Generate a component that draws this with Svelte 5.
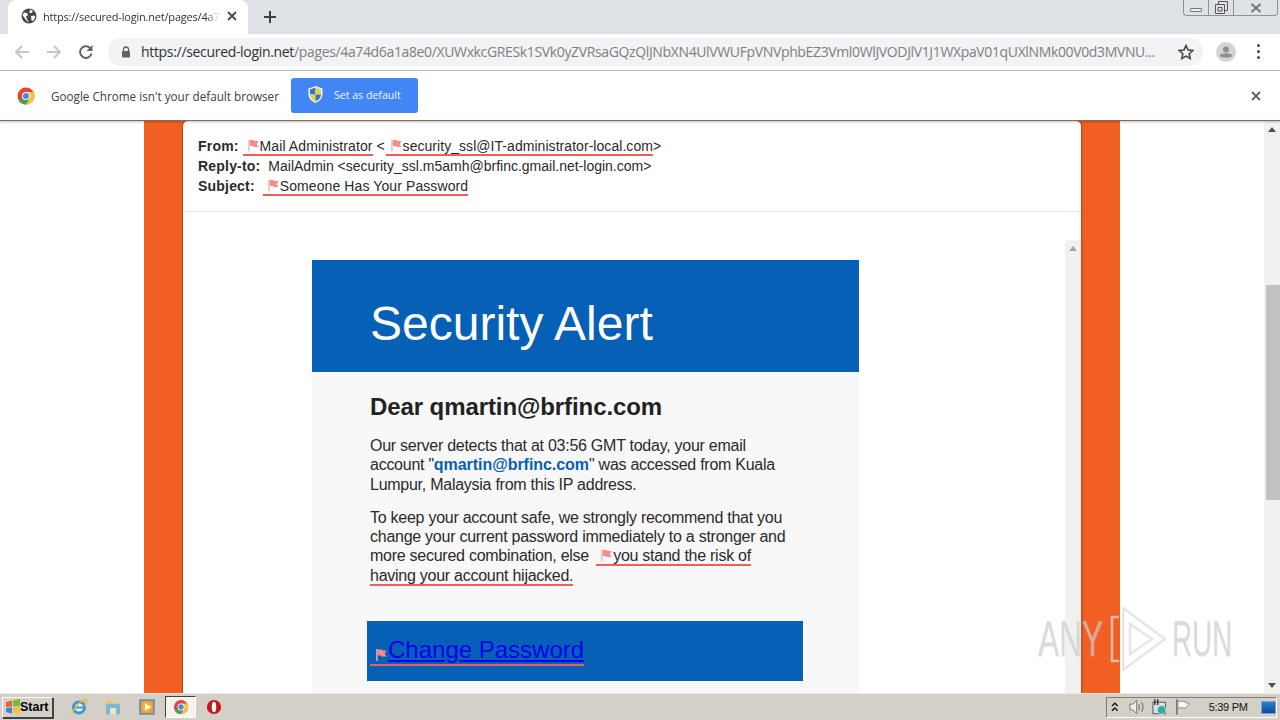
<script>
  const longUrl = "/pages/4a74d6a1a8e0/XUWxkcGRESk1SVk0yZVRsaGQzQlJNbXN4UlVWUFpVNVphbEZ3Vml0WlJVODJlV1J1WXpaV01qUXlNMk00V0d3MVNU...";
</script>

<div class="screen">
  <header class="tabstrip">
    <div class="tab">
      <svg class="globe" viewBox="0 0 16 16" width="16" height="16"><circle cx="8" cy="8" r="7.5" fill="#45484c"/><path d="M3 4.500l3 .5 1 2-2 1.500 1 2.500 1.500 3-1-.2L3.500 10 1.500 7zM9 1.500l3 1.500-1.500 2H8.500zM10 8l3.500-.5.8 2-2.300 3.500-1.500-.5z" fill="#fff"/></svg>
      <span class="tab-title">https://secured-login.net/pages/4a7</span>
      <svg class="tab-x" viewBox="0 0 10 10" width="10" height="10"><path d="M1 1l8 8M9 1l-8 8" stroke="#45484c" stroke-width="1.800"/></svg>
    </div>
    <svg class="plus" viewBox="0 0 12 12" width="12" height="12"><path d="M6 0v12M0 6h12" stroke="#3c4043" stroke-width="2"/></svg>
    <div class="winbtns">
      <span class="wb wb-min"><i></i></span>
      <span class="wb wb-max"><svg viewBox="0 0 13 13" width="13" height="13"><path d="M3.500 3.500V.5h9v9h-3M.5 3.500h9v9h-9zM3 6.500h4v3.500H3z" fill="none" stroke="#555"/></svg></span>
      <span class="wb wb-close"><svg viewBox="0 0 12 10" width="12" height="10"><path d="M1.500 1l9 8M10.500 1l-9 8" stroke="#777" stroke-width="2"/></svg></span>
    </div>
  </header>

  <nav class="toolbar">
    <svg class="nav-ic" viewBox="0 0 16 16" width="16" height="16"><path d="M15 8H2M8 2L2 8l6 6" fill="none" stroke="#c4c7ca" stroke-width="2"/></svg>
    <svg class="nav-ic" viewBox="0 0 16 16" width="16" height="16"><path d="M1 8h13M8 2l6 6-6 6" fill="none" stroke="#c4c7ca" stroke-width="2"/></svg>
    <svg class="nav-ic" viewBox="0 0 16 16" width="16" height="16"><path d="M13.500 9.500A5.800 5.800 0 1 1 12 4" fill="none" stroke="#5f6368" stroke-width="2"/><path d="M14.500 1v6h-6z" fill="#5f6368"/></svg>
    <div class="omnibox">
      <svg class="lock" viewBox="0 0 10 12" width="10" height="12"><path d="M2.500 5V3.500a2.500 2.500 0 0 1 5 0V5" fill="none" stroke="#5f6368" stroke-width="1.300"/><rect x="1" y="5" width="8" height="6.500" rx="1" fill="#5f6368"/></svg>
      <span class="url"><span class="url-host">https://secured-login.net</span>{longUrl}</span>
      <svg class="star" viewBox="0 0 16 16" width="16" height="16"><path d="M8 1.500l2 4.500 4.800.5-3.600 3.200 1 4.800L8 12.100l-4.200 2.400 1-4.800L1.200 6.500 6 6z" fill="none" stroke="#45484c" stroke-width="1.600"/></svg>
    </div>
    <span class="avatar"><svg viewBox="0 0 20 20" width="20" height="20"><circle cx="10" cy="10" r="10" fill="#d3d4d6"/><circle cx="10" cy="7.500" r="3" fill="#8d8f92"/><path d="M3.500 13.500c2-3 11-3 13 0-1 3-12 3-13 0z" fill="#8d8f92"/></svg></span>
    <span class="kebab"><i></i><i></i><i></i></span>
  </nav>

  <aside class="infobar">
    <svg class="chrome-ic" viewBox="0 0 18 18" width="18" height="18">
      <circle cx="9" cy="9" r="8.500" fill="#ea4335"/>
      <path d="M9 9L1.600 13.200A8.500 8.500 0 0 0 9 17.500l4.300-6z" fill="#4a9d56"/>
      <path d="M9 5h7.500a8.500 8.500 0 0 1-7.500 12.500l4-7z" fill="#f6c343"/>
      <circle cx="9" cy="9" r="4" fill="#fff"/><circle cx="9" cy="9" r="3" fill="#4a86d8"/>
    </svg>
    <span class="info-text">Google Chrome isn't your default browser</span>
    <button class="default-btn">
      <svg viewBox="0 0 15 17" width="15" height="17">
        <path d="M7.500 0l7 2.500v6c0 4-3 6.800-7 8.500-4-1.700-7-4.500-7-8.500v-6z" fill="#f4f6f8"/>
        <path d="M7.500 1.500V8.500H2V3.400z" fill="#2f78c8"/>
        <path d="M7.500 1.500L13 3.400v5.100H7.500z" fill="#f2cf3e"/>
        <path d="M2 8.500h5.500v6.800C4.300 14 2 11.800 2 8.500z" fill="#f2cf3e"/>
        <path d="M13 8.500H7.500v6.800c3.200-1.300 5.500-3.500 5.500-6.800z" fill="#2f78c8"/>
      </svg>
      <span>Set as default</span>
    </button>
    <svg class="info-x" viewBox="0 0 10 10" width="10" height="10"><path d="M1 1l8 8M9 1l-8 8" stroke="#5f6368" stroke-width="1.800"/></svg>
  </aside>

  <main class="viewport">
    <div class="page">
      <div class="orange">
        <article class="card">
          <section class="meta">
            <div class="meta-row"><b>From:</b> <mark class="flagged wide"><svg class="flag"><use href="#flag"/></svg>Mail Administrator</mark> &lt; <mark class="flagged email"><svg class="flag"><use href="#flag"/></svg>security_ssl@IT-administrator-local.com</mark>&gt;</div>
            <div class="meta-row"><b>Reply-to:</b> <span class="gap2"></span>MailAdmin &lt;security_ssl.m5amh@brfinc.gmail.net-login.com&gt;</div>
            <div class="meta-row"><b>Subject:</b> <span class="gap3"></span><mark class="flagged wide"><svg class="flag"><use href="#flag"/></svg>Someone Has Your Password</mark></div>
          </section>
          <section class="frame">
            <div class="mail">
              <div class="mail-head">Security Alert</div>
              <div class="mail-body">
                <h2>Dear qmartin@brfinc.com</h2>
                <p>Our server detects that at 03:56 GMT today, your email account "<a class="addr" href="#top">qmartin@brfinc.com</a>" was accessed from Kuala Lumpur, Malaysia from this IP address.</p>
                <p>To keep your account safe, we strongly recommend that you change your current password immediately to a stronger and more secured combination, else <mark class="flagged risk"><svg class="flag"><use href="#flag"/></svg>you stand the risk of having your account hijacked.</mark></p>
                <div class="cta"><mark class="flagged cta-link"><svg class="flag flag-sm"><use href="#flag"/></svg><a href="#top">Change Password</a></mark></div>
              </div>
            </div>
            <div class="inner-scroll">
              <span class="up-mini"></span>
            </div>
          </section>
        </article>
      </div>
      <div class="watermark">
        <span class="wm-any">ANY</span>
        <svg viewBox="0 0 56 64" width="56" height="64">
          <path d="M9 10H2v44h7" fill="none" stroke="#d9d9d9" stroke-width="2.500" opacity=".75"/>
          <path d="M13 1l42 31-42 31z" fill="none" stroke="#dcdcdc" stroke-width="2.500" opacity=".7"/>
          <path d="M20 17l22 15-22 15z" fill="none" stroke="#dcdcdc" stroke-width="2.500" opacity=".7"/>
        </svg>
        <span class="wm-run">RUN</span>
      </div>
    </div>
    <div class="scrollbar">
      <span class="arrow up"></span>
      <span class="thumb"></span>
      <span class="arrow down"></span>
    </div>
  </main>

  <footer class="taskbar">
    <button class="start">
      <svg viewBox="0 0 16 16" width="16" height="16"><path d="M1 3l6-1.500v6L1 8z" fill="#e8622c"/><path d="M8 1.500L15 0v7l-7 .5z" fill="#7cb83f"/><path d="M1 9l6-.5v6L1 13z" fill="#3a86d6"/><path d="M8 8.500l7-.5v7l-7-1z" fill="#f3c53c"/></svg>
      <b>Start</b>
    </button>
    <div class="quick">
      <svg viewBox="0 0 18 18" width="18" height="18"><circle cx="9" cy="9.500" r="5.500" fill="#e9f2f8" stroke="#3d96d8" stroke-width="3"/><path d="M4 9.500h10" stroke="#3d96d8" stroke-width="2"/><path d="M1.500 16C5 8 11 2 16.500 1.500c1 2-1 5-2 6.500" fill="none" stroke="#e6b93c" stroke-width="1.300"/></svg>
      <svg viewBox="0 0 18 18" width="18" height="18"><path d="M2 6V3h6l1 2h7v2z" fill="#e8c668"/><rect x="2" y="6" width="14" height="10.500" rx="1" fill="#7bb8d8"/><rect x="6" y="10" width="6" height="6.500" fill="#eae6cc"/></svg>
      <svg viewBox="0 0 18 18" width="18" height="18"><rect x="2" y="2" width="14" height="14" fill="#f39a2e" stroke="#4d90c8" stroke-width="1.500"/><circle cx="9" cy="9" r="5" fill="#f7b43c"/><path d="M7 5.500l6 3.500-6 3.500z" fill="#fff"/></svg>
      <span class="active-app"><svg viewBox="0 0 18 18" width="16" height="16"><circle cx="9" cy="9" r="8" fill="#d9483b"/><path d="M9 9L2.200 13.200A8 8 0 0 0 9 17l4-6z" fill="#4a9d56"/><path d="M9 5h7a8 8 0 0 1-7 12l4-7z" fill="#f6c343"/><circle cx="9" cy="9" r="4" fill="#fff"/><circle cx="9" cy="9" r="3" fill="#4a86d8"/></svg></span>
      <svg class="opera" viewBox="0 0 18 18" width="16" height="16"><circle cx="9" cy="9" r="8" fill="#c8151b"/><ellipse cx="9" cy="9" rx="2.500" ry="6" fill="#fff"/></svg>
    </div>
    <div class="tray">
      <svg viewBox="0 0 8 10" width="8" height="10"><path d="M1 4l3-3 3 3M1 9l3-3 3 3" fill="none" stroke="#111" stroke-width="1.400"/></svg>
      <svg class="speaker" viewBox="0 0 16 16" width="16" height="16"><path d="M1 5h3l4-4v14l-4-4H1z" fill="#eee" stroke="#777"/><path d="M10 5c1 2 1 4 0 6M13 3c2 3 2 7 0 10" fill="none" stroke="#777" stroke-width="1.200"/></svg>
      <svg viewBox="0 0 16 16" width="16" height="16"><rect x="1" y="3" width="13" height="12" fill="#d5e2ea" stroke="#555"/><circle cx="10" cy="11" r="4.500" fill="#39a9a3" stroke="#dff" stroke-width=".7"/><path d="M3 0v6M6 0v6" stroke="#222" stroke-width="1.300"/></svg>
      <svg viewBox="0 0 16 16" width="16" height="16"><path d="M2 0v16" stroke="#666" stroke-width="1.500"/><path d="M3 2h6l6 3-4 4H3z" fill="#f6f6f6" stroke="#888"/></svg>
      <span class="clock">5:39 PM</span>
      <span class="desktop"></span>
    </div>
  </footer>

  <svg class="defs" width="0" height="0" aria-hidden="true">
    <symbol id="flag" viewBox="0 0 12 13"><path d="M1 0v13" stroke="#f5b5b5" stroke-width="1.500"/><path d="M2 .5h4l1 1h4.500L9.500 5l2 3H6.500l-1-1H2z" fill="#fb8a8a"/></symbol>
  </svg>
</div>

<style>
  :global(body) { margin: 0; }
  .screen { width: 1280px; height: 720px; display: flex; flex-direction: column; overflow: hidden; position: relative; font-family: "Liberation Sans", Arial, sans-serif; background: #fff; }
  .defs { position: absolute; }

  .tabstrip { height: 34px; flex: none; background: #dee1e6; display: flex; align-items: flex-end; }
  .tab { width: 240px; height: 34px; margin-left: 8px; background: #fff; border-radius: 8px 8px 0 0; display: flex; align-items: center; box-sizing: border-box; padding: 0 8px 2px 13px; }
  .globe { flex: none; }
  .tab-title { font-family: "Open Sans", sans-serif; font-size: 11px; color: #333; margin-left: 6px; width: 177px; white-space: nowrap; letter-spacing: -.2px; -webkit-mask-image: linear-gradient(90deg, #000 92%, transparent); mask-image: linear-gradient(90deg, #000 92%, transparent); }
  .tab-x { margin-left: 7px; flex: none; }
  .plus { align-self: center; margin-left: 16px; flex: none; }
  .winbtns { margin-left: auto; margin-right: 2px; align-self: flex-start; display: flex; height: 16px; border: 1px solid #8a929c; border-top: 0; border-radius: 0 0 4px 4px; box-sizing: border-box; }
  .wb { display: flex; align-items: center; justify-content: center; height: 100%; }
  .wb-min { width: 24px; border-right: 1px solid #8a929c; }
  .wb-min i { display: block; width: 12px; height: 4px; border: 1px solid #777; border-radius: 1px; box-sizing: border-box; margin-top: 5px; background: #eee; }
  .wb-max { width: 24px; border-right: 1px solid #8a929c; }
  .wb-close { width: 43px; }

  .toolbar { height: 37px; flex: none; box-sizing: border-box; background: #fff; border-bottom: 1px solid #bcbdbe; display: flex; align-items: center; padding: 0 0 1px 14px; }
  .nav-ic { flex: none; margin-right: 16px; }
  .nav-ic:nth-child(3) { margin-right: 14px; }
  .omnibox { width: 1095px; height: 28px; background: #f1f3f4; border-radius: 14px; display: flex; align-items: center; box-sizing: border-box; padding: 0 9px 0 13px; flex: none; }
  .lock { flex: none; }
  .url { font-family: "Open Sans", sans-serif; font-size: 14px; color: #7d8084; margin-left: 10px; width: 1018px; white-space: nowrap; letter-spacing: -.36px; }
  .url-host { color: #303236; letter-spacing: -.32px; }
  .star { margin-left: auto; flex: none; }
  .avatar { width: 20px; height: 20px; margin-left: 13px; flex: none; }
  .kebab { display: flex; flex-direction: column; gap: 3px; margin-left: 21px; }
  .kebab i { display: block; width: 3px; height: 3px; border-radius: 50%; background: #45484c; }

  .infobar { height: 50px; flex: none; box-sizing: border-box; background: #fff; border-bottom: 1px solid #8a6a58; box-shadow: 0 1px 2px rgba(0,0,0,.25); display: flex; align-items: center; padding: 0 17px; position: relative; z-index: 2; }
  .info-text { font-family: "Open Sans", sans-serif; font-size: 11.700px; color: #3c4043; margin-left: 16px; white-space: nowrap; }
  .default-btn { width: 127px; height: 35px; margin-left: 12px; background: #4285f4; border: 0; border-radius: 3px; color: #f2f6fe; font-family: "Open Sans", sans-serif; font-size: 10.600px; display: flex; align-items: center; justify-content: flex-start; padding: 0 0 2px 17px; gap: 11px; }
  .info-x { margin-left: auto; margin-right: 2px; }

  .viewport { flex: 1; min-height: 0; display: flex; background: #fff; }
  .page { flex: 1; position: relative; overflow: hidden; display: flex; }
  .orange { width: 976px; margin-left: 144px; background: #f15f22; box-sizing: border-box; padding: 0 39px; }
  .card { background: #fff; height: 100%; border-radius: 5px 5px 0 0; box-shadow: -1px 0 1px #a8481a, 1px 0 2px #a8481a; display: flex; flex-direction: column; }
  .meta { height: 91px; flex: none; box-sizing: border-box; border-bottom: 1px solid #e6e6e6; padding: 15px 0 0 15px; font-size: 14px; line-height: 20px; color: #2a2a2a; }
  .meta-row { white-space: nowrap; }
  .meta-row b { letter-spacing: .2px; }
  .gap2 { display: inline-block; width: 4px; }
  .gap3 { display: inline-block; width: 4px; }
  mark.flagged { background: none; color: inherit; border-bottom: 2px solid #ee5f5b; padding-left: 4px; }
  mark.wide { letter-spacing: .1px; }
  mark.email { letter-spacing: .05px; margin-left: -3px; }
  mark.risk { margin-left: 3px; }
  .flag { width: 11px; height: 13px; margin: 0 1px; vertical-align: -1px; }
  .flag-sm { width: 11px; height: 12px; margin: 0 1px 0 2px; vertical-align: -3px; }

  .frame { flex: 1; min-height: 0; display: flex; padding-top: 28px; position: relative; }
  .mail { width: 547px; margin-left: 129px; margin-top: 20px; flex: none; display: flex; flex-direction: column; }
  .mail-head { height: 112px; flex: none; box-sizing: border-box; background: #0560b6; color: #fff; font-size: 48px; line-height: 54px; padding: 37px 0 0 58px; white-space: nowrap; }
  .mail-body { flex: 1; background: #f8f8f8; box-sizing: border-box; padding: 20px 0 0 58px; color: #2a2a2a; }
  .mail-body h2 { margin: 0 0 14px; font-size: 24px; line-height: 30px; font-weight: 700; letter-spacing: -.09px; color: #222; }
  .mail-body p { margin: 0 0 14px; width: 420px; font-size: 16px; line-height: 19.300px; letter-spacing: -.26px; }
  .addr { color: #0560b6; font-weight: 700; text-decoration: none; letter-spacing: -.05px; }
  .cta { width: 436px; height: 60px; margin: 36px 0 0 -3px; background: #0560b6; box-sizing: border-box; padding: 14px 0 0 3px; font-size: 24px; line-height: 30px; }
  .cta-link { display: inline-block; padding-left: 0; line-height: 28px; border-bottom-color: #e8605a; }
  .cta-link a { color: #0000ee; text-decoration: underline; }

  .inner-scroll { position: absolute; right: 0; top: 28px; bottom: 0; width: 16px; background: #f1f1f1; }
  .up-mini { position: absolute; left: 4px; top: 6px; border: 4px solid transparent; border-top: 0; border-bottom: 5px solid #a3a3a3; }

  .watermark { position: absolute; left: 1038px; top: 486px; height: 64px; display: flex; align-items: center; font-size: 50px; line-height: 64px; color: rgba(205,205,205,.6); text-shadow: 1px 1px 1px rgba(200,200,200,.35); pointer-events: none; }
  .watermark svg { flex: none; margin-left: 7px; margin-right: 6px; }
  .watermark span { display: block; width: 65px; white-space: nowrap; transform-origin: left center; }
  .wm-any { transform: scaleX(.63); }
  .watermark .wm-run { width: 60px; transform: scaleX(.555); }

  .scrollbar { width: 16px; flex: none; background: #f1f1f1; position: relative; }
  .arrow { position: absolute; left: 4px; border: 4px solid transparent; }
  .arrow.up { top: 6px; border-top: 0; border-bottom: 5px solid #505050; }
  .arrow.down { bottom: 5px; border-bottom: 0; border-top: 5px solid #505050; }
  .thumb { position: absolute; left: 2px; right: 0; top: 164px; height: 215px; background: #c1c1c1; }

  .taskbar { height: 27px; flex: none; box-sizing: border-box; background: #d4d0c8; border-top: 1px solid #eeeae2; display: flex; align-items: center; }
  .start { width: 51px; height: 21px; margin-left: 2px; padding: 0 0 0 2px; display: flex; align-items: center; background: #d4d0c8; border: 1px solid; border-color: #fff #404040 #404040 #fff; box-shadow: 1px 1px 0 #444; font-family: "Liberation Sans", sans-serif; font-size: 12.500px; color: #000; }
  .start b { margin-left: -1px; }
  .quick { display: flex; align-items: center; margin-left: 17px; gap: 16px; }
  .active-app { width: 31px; height: 22px; margin: 0 -7px; box-sizing: border-box; border: 1px solid; border-color: #404040 #fff #fff #404040; background: #f5f3ee; display: flex; align-items: center; justify-content: center; }
  .opera { margin-left: 1px; }
  .tray { margin-left: auto; margin-right: 3px; width: 171px; height: 21px; box-sizing: border-box; border: 1px solid; border-color: #7f7f7f #fff #fff #7f7f7f; display: flex; align-items: center; padding-left: 4px; gap: 8px; }
  .speaker { margin-left: 2px; }
  .clock { font-family: "Liberation Sans", sans-serif; font-size: 11px; letter-spacing: -.3px; color: #111; margin-left: 10px; white-space: nowrap; }
  .desktop { width: 14px; height: 11px; background: linear-gradient(#2f7fd0, #0f4a96); border: 1px solid #7aa6d6; margin-left: 5px; }
</style>
